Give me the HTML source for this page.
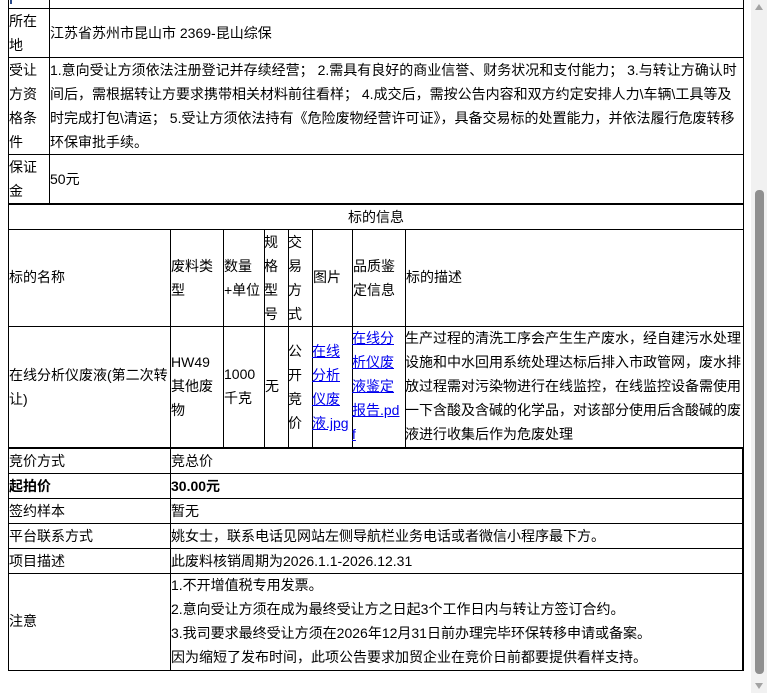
<!DOCTYPE html>
<html><head><meta charset="utf-8">
<style>
html,body{margin:0;padding:0;background:#fff;width:767px;height:693px;overflow:hidden;position:relative;
font-family:"Liberation Sans","Noto Sans CJK SC",sans-serif;font-size:14px;color:#000;}
.h{position:absolute;height:1px;background:#000}
.v{position:absolute;width:1px;background:#000}
.t{position:absolute;line-height:24px;white-space:nowrap}
a{color:#0000ee;text-decoration:underline}
</style></head><body>
<!-- lines -->
<div class="h" style="left:8px;width:736px;top:8px"></div>
<div class="h" style="left:8px;width:736px;top:57px"></div>
<div class="h" style="left:8px;width:736px;top:154px"></div>
<div class="h" style="left:8px;width:736px;top:203px;height:2px"></div>
<div class="h" style="left:8px;width:736px;top:229px"></div>
<div class="h" style="left:8px;width:736px;top:326px"></div>
<div class="h" style="left:8px;width:736px;top:447px;height:2px"></div>
<div class="h" style="left:8px;width:735px;top:473px"></div>
<div class="h" style="left:8px;width:735px;top:498px"></div>
<div class="h" style="left:8px;width:735px;top:523px"></div>
<div class="h" style="left:8px;width:735px;top:548px"></div>
<div class="h" style="left:8px;width:735px;top:573px"></div>
<div class="h" style="left:8px;width:735px;top:670px"></div>
<div class="v" style="left:8px;top:0;height:671px"></div>
<div class="v" style="left:743px;top:0;height:449px"></div>
<div class="v" style="left:742px;top:447px;height:224px;width:2px"></div>
<div class="v" style="left:49px;top:0;height:204px"></div>
<div class="v" style="left:170px;top:229px;height:441px"></div>
<div class="v" style="left:223px;top:229px;height:219px"></div>
<div class="v" style="left:264px;top:229px;height:219px"></div>
<div class="v" style="left:288px;top:229px;height:219px"></div>
<div class="v" style="left:312px;top:229px;height:219px"></div>
<div class="v" style="left:352px;top:229px;height:219px"></div>
<div class="v" style="left:405px;top:229px;height:219px"></div>
<div class="v" style="left:10px;top:0;height:4px;width:2px;background:#2a4a8a"></div>

<!-- upper rows -->
<div class="t" style="left:9px;top:9px">所在<br>地</div>
<div class="t" style="left:50px;top:21px">江苏省苏州市昆山市 2369-昆山综保</div>
<div class="t" style="left:9px;top:58px">受让<br>方资<br>格条<br>件</div>
<div class="t" style="left:50px;top:58px">1.意向受让方须依法注册登记并存续经营； 2.需具有良好的商业信誉、财务状况和支付能力； 3.与转让方确认时<br>间后，需根据转让方要求携带相关材料前往看样； 4.成交后，需按公告内容和双方约定安排人力\车辆\工具等及<br>时完成打包\清运； 5.受让方须依法持有《危险废物经营许可证》，具备交易标的处置能力，并依法履行危废转移<br>环保审批手续。</div>
<div class="t" style="left:9px;top:155px">保证<br>金</div>
<div class="t" style="left:50px;top:167px">50元</div>
<div class="t" style="left:8px;width:736px;text-align:center;top:205px">标的信息</div>

<!-- header -->
<div class="t" style="left:9px;top:265px">标的名称</div>
<div class="t" style="left:171px;top:254px">废料类<br>型</div>
<div class="t" style="left:224px;top:254px">数量<br>+单位</div>
<div class="t" style="left:264px;top:230px">规<br>格<br>型<br>号</div>
<div class="t" style="left:288px;top:230px">交<br>易<br>方<br>式</div>
<div class="t" style="left:313px;top:265px">图片</div>
<div class="t" style="left:353px;top:254px">品质鉴<br>定信息</div>
<div class="t" style="left:406px;top:265px">标的描述</div>

<!-- data -->
<div class="t" style="left:9px;top:363px">在线分析仪废液(第二次转<br>让)</div>
<div class="t" style="left:171px;top:350px">HW49<br>其他废<br>物</div>
<div class="t" style="left:224px;top:362px">1000<br>千克</div>
<div class="t" style="left:265px;top:374px">无</div>
<div class="t" style="left:288px;top:339px">公<br>开<br>竞<br>价</div>
<div class="t" style="left:312px;top:339px"><a>在线</a><br><a>分析</a><br><a>仪废</a><br><a>液.jpg</a></div>
<div class="t" style="left:352px;top:326px"><a>在线分</a><br><a>析仪废</a><br><a>液鉴定</a><br><a>报告.pd</a><br><a>f</a></div>
<div class="t" style="left:405px;top:326px">生产过程的清洗工序会产生生产废水，经自建污水处理<br>设施和中水回用系统处理达标后排入市政管网，废水排<br>放过程需对污染物进行在线监控，在线监控设备需使用<br>一下含酸及含碱的化学品，对该部分使用后含酸碱的废<br>液进行收集后作为危废处理</div>

<!-- lower -->
<div class="t" style="left:9px;top:449px">竞价方式</div>
<div class="t" style="left:171px;top:449px">竞总价</div>
<div class="t" style="left:9px;top:474px;font-weight:bold">起拍价</div>
<div class="t" style="left:171px;top:474px;font-weight:bold">30.00元</div>
<div class="t" style="left:9px;top:499px">签约样本</div>
<div class="t" style="left:171px;top:499px">暂无</div>
<div class="t" style="left:9px;top:524px">平台联系方式</div>
<div class="t" style="left:171px;top:524px">姚女士，联系电话见网站左侧导航栏业务电话或者微信小程序最下方。</div>
<div class="t" style="left:9px;top:549px">项目描述</div>
<div class="t" style="left:171px;top:549px">此废料核销周期为2026.1.1-2026.12.31</div>
<div class="t" style="left:9px;top:609px">注意</div>
<div class="t" style="left:171px;top:573px">1.不开增值税专用发票。<br>2.意向受让方须在成为最终受让方之日起3个工作日内与转让方签订合约。<br>3.我司要求最终受让方须在2026年12月31日前办理完毕环保转移申请或备案。<br>因为缩短了发布时间，此项公告要求加贸企业在竞价日前都要提供看样支持。</div>

<!-- scrollbar -->
<div style="position:absolute;left:751px;top:0;width:16px;height:693px;background:#f1f1f1"></div>
<div style="position:absolute;left:755px;top:190px;width:9px;height:484px;background:#8f8f8f;border-radius:4px"></div>
<div style="position:absolute;left:755px;top:4px;width:0;height:0;border-left:4px solid transparent;border-right:4px solid transparent;border-bottom:6px solid #a3a3a3"></div>
<div style="position:absolute;left:755px;top:683px;width:0;height:0;border-left:4px solid transparent;border-right:4px solid transparent;border-top:6px solid #a3a3a3"></div>
</body></html>
